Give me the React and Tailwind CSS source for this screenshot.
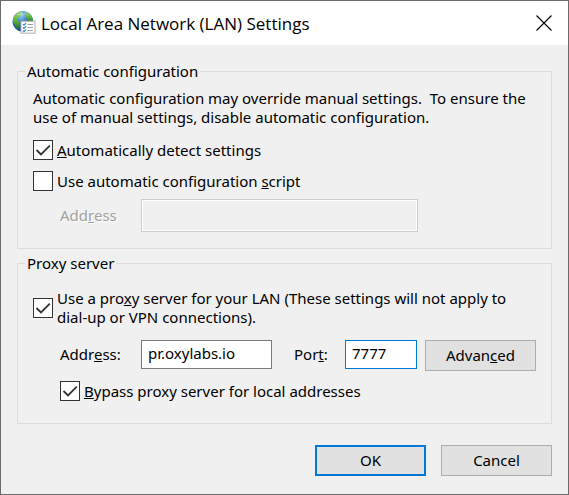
function NetworkIcon() {
  return (
    <svg className="size-6 shrink-0" viewBox="0 .4 24 24" aria-hidden="true">
      <defs>
        <radialGradient id="ocean" cx="0.4" cy="0.2" r="0.85">
          <stop offset="0" stopColor="#9fd0f3" />
          <stop offset="0.4" stopColor="#3a7fd0" />
          <stop offset="1" stopColor="#123a8c" />
        </radialGradient>
        <linearGradient id="land" x1="0" y1="0" x2="0" y2="1">
          <stop offset="0" stopColor="#9ccf8a" />
          <stop offset="0.5" stopColor="#5fb53c" />
          <stop offset="1" stopColor="#1f6f2a" />
        </linearGradient>
      </defs>
      <circle cx="10.8" cy="10.8" r="10.4" fill="url(#ocean)" />
      <path
        d="M2.2 5.2C4 2.4 6.6.9 9.6.6L11 2.2 9 3.6 8.8 5.6 6 7.2 5 9.6 6.8 11 8 13.4 6.8 16 6.4 19 4.4 17.8 3.2 14.6 1 11.6 1 8Z"
        fill="url(#land)"
      />
      <path
        d="M12.4 1.4 16.2 2 19.4 5 21 9 20.6 11.6 18.6 10 17 10.8 14.6 9.4 14.8 7 12.8 5.6 13.6 3.6Z"
        fill="url(#land)"
      />
      <path d="M4.5 4.5C6.5 2 12 1.5 14 3.5 12 5 7 5.5 4.5 4.5Z" fill="#fff" opacity="0.3" />
      <rect x="9" y="10.6" width="14" height="12" fill="#fcfcfc" stroke="#b0b0b0" />
      <path d="M11 13.6l1 1 2-2M11 16.8l1 1 2-2M11 20l1 1 2-2" fill="none" stroke="#2a86c8" strokeWidth="1.2" />
      <path d="M15.5 13.9h5.5M15.5 16.9h5.500M15.5 19.9h5.5" stroke="#9aa3ae" />
    </svg>
  );
}

function Checkbox({ id, className = '', children, defaultChecked }) {
  return (
    <div className={`flex items-center gap-1 ${className}`}>
      <span className="relative flex size-5 shrink-0">
        <input
          id={id}
          type="checkbox"
          defaultChecked={defaultChecked}
          className="peer size-5 appearance-none border border-[#333] bg-white"
        />
        <svg
          className="pointer-events-none absolute inset-0 hidden size-5 peer-checked:block"
          viewBox="0 0 20 20"
          fill="none"
          stroke="#333"
          strokeWidth="1.8"
        >
          <path d="M3.5 10 8 14.5 16.8 5.7" />
        </svg>
      </span>
      <label htmlFor={id}>{children}</label>
    </div>
  );
}

function Group({ title, className = '', children }) {
  return (
    <fieldset className={`min-w-0 border border-[#dcdcdc] px-[15px] ${className}`}>
      <legend className="-ml-2 px-0.5 leading-5">{title}</legend>
      {children}
    </fieldset>
  );
}

function Button({ className = 'border border-[#adadad]', children }) {
  return (
    <button type="button" className={`h-[31px] w-[111px] shrink-0 bg-[#e1e1e1] ${className}`}>
      {children}
    </button>
  );
}

export default function App() {
  return (
    <div className='flex min-h-screen flex-col border border-[#6b6b6b] bg-[#f0f0f0] font-["Noto_Sans",sans-serif] text-[15px] leading-[19px] text-black'>
      {/* Title bar */}
      <header className="flex h-11 items-center bg-white pr-4 pl-[11px]">
        <NetworkIcon />
        <h1 className='ml-[5px] flex-1 font-["Open_Sans",sans-serif] text-[17px]'>Local Area Network (LAN) Settings</h1>
        <button type="button" aria-label="Close">
          <svg className="size-4" viewBox="0 0 16 16" stroke="#000" strokeWidth="1.1">
            <path d="M.5.5l15 15M15.5.5l-15 15" />
          </svg>
        </button>
      </header>

      <main className="px-4 pt-4">
        <Group title="Automatic configuration" className="pt-2 pb-4">
          <p>
            Automatic configuration may override manual settings.&nbsp; To ensure the use of manual settings, disable
            automatic configuration.
          </p>
          <Checkbox id="auto-detect" className="mt-[13px]" defaultChecked>
            <u>A</u>utomatically detect settings
          </Checkbox>
          <Checkbox id="auto-script" className="mt-[11px]">
            Use automatic configuration <u>s</u>cript
          </Checkbox>
          <div className="mt-2 flex items-center pl-[27px] text-[#a0a0a0]">
            <label htmlFor="script-address" className="w-[81px] [text-shadow:1px_1px_#fff]">
              Add<u>r</u>ess
            </label>
            <input
              id="script-address"
              disabled
              className="h-[33px] w-[277px] border border-[#ccc] bg-[#f0f0f0] px-1.5 inset-ring inset-ring-white"
            />
          </div>
        </Group>

        <Group title="Proxy server" className="mt-1 pt-4 pb-[22px]">
          <Checkbox id="use-proxy" defaultChecked>
            Use a pro<u>x</u>y server for your LAN (These settings will not apply to
            <br />
            dial-up or VPN connections).
          </Checkbox>
          <div className="mt-[13px] flex items-start pl-[27px]">
            <label htmlFor="proxy-address" className="w-[81px] leading-[29px]">
              Addr<u>e</u>ss:
            </label>
            <input
              id="proxy-address"
              defaultValue="pr.oxylabs.io"
              className="h-[29px] min-w-0 flex-1 border border-[#7a7a7a] bg-white px-1.5 pb-1"
            />
            <label htmlFor="proxy-port" className="ml-[22px] w-[51px] leading-[29px]">
              Por<u>t</u>:
            </label>
            <input
              id="proxy-port"
              defaultValue="7777"
              className="mr-2 h-[29px] w-[72px] border border-[#0078d7] bg-white px-1.5 pb-1"
            />
            <Button>
              Advan<u>c</u>ed
            </Button>
          </div>
          <Checkbox id="bypass" className="mt-2.5 pl-[27px]" defaultChecked>
            <u>B</u>ypass proxy server for local addresses
          </Checkbox>
        </Group>

        <div className="mt-[21px] flex justify-end gap-[15px]">
          <Button className="border-2 border-[#0078d7]">OK</Button>
          <Button>Cancel</Button>
        </div>
      </main>
    </div>
  );
}
